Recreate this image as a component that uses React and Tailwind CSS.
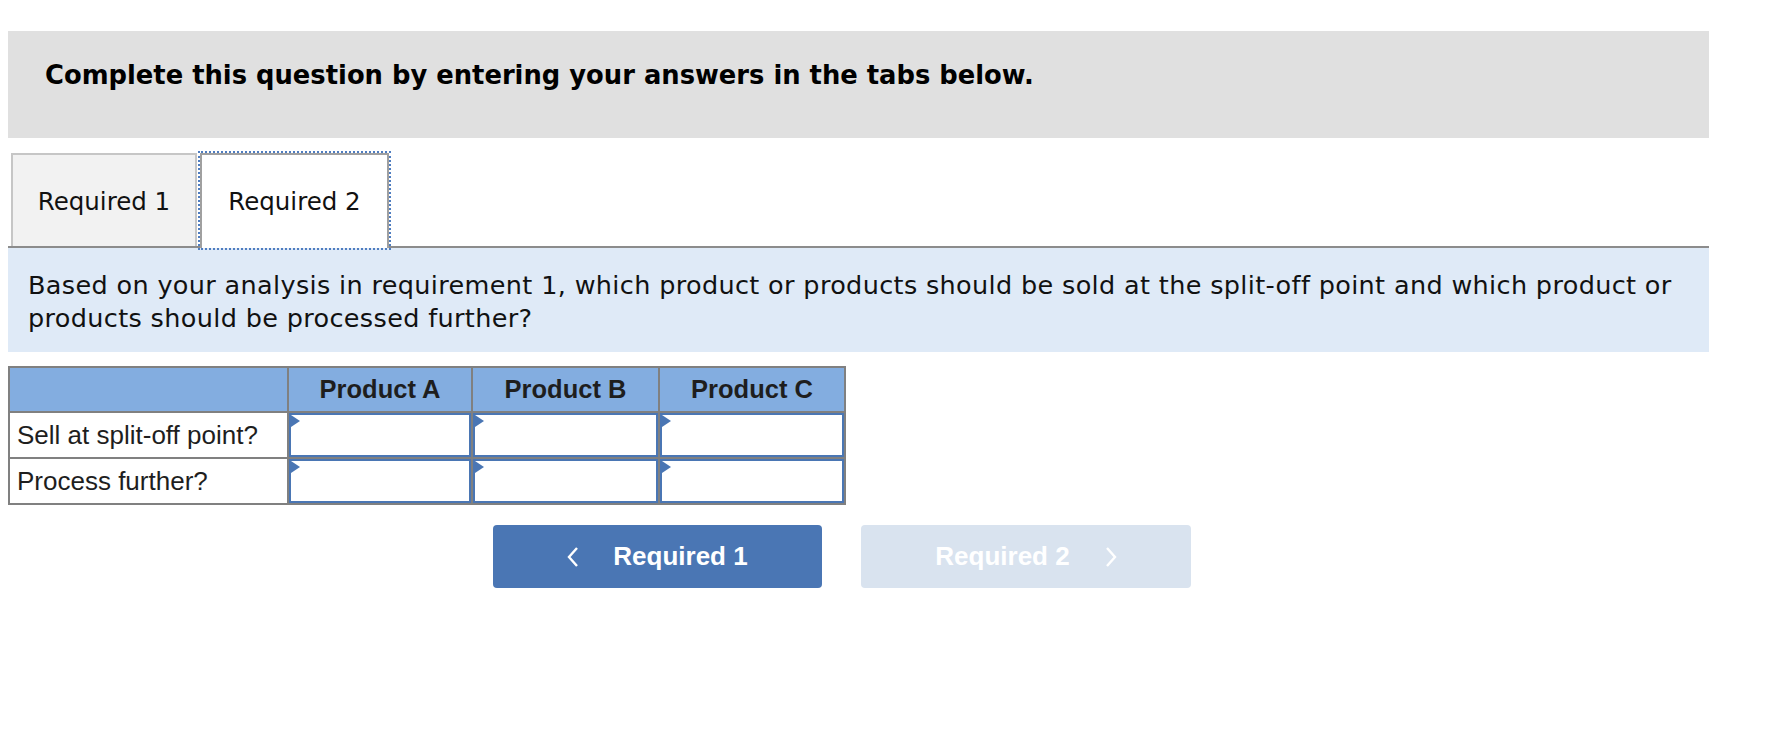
import React from "react";

const verdana = { fontFamily: '"DejaVu Sans", Verdana, sans-serif' };
const arial = { fontFamily: '"Liberation Sans", Arial, sans-serif' };

function Chevron({ dir = "left", color = "#ffffff" }) {
  const pts = dir === "left" ? "10,1 2,10 10,19" : "2,1 10,10 2,19";
  return (
    <svg width="12" height="20" viewBox="0 0 12 20" fill="none">
      <polyline points={pts} stroke={color} strokeWidth="2.4" strokeLinejoin="miter" />
    </svg>
  );
}

function AnswerCell() {
  return (
    <td className="border-2 border-[#808080] p-0 h-[46px]">
      <div className="relative h-[44px] border-2 border-[#4a76b4] bg-white">
        <svg className="absolute left-0 top-0" width="10" height="13" viewBox="0 0 10 13">
          <polygon points="0,0 9,6 0,12" fill="#4a76b4" />
        </svg>
      </div>
    </td>
  );
}

export default function App() {
  const rows = ["Sell at split-off point?", "Process further?"];
  const products = ["Product A", "Product B", "Product C"];

  return (
    <div className="bg-white min-h-[736px] pt-[31px]">
      <div className="ml-[8px] w-[1701px]">
        {/* instructions bar */}
        <div className="h-[107px] bg-[#e0e0e0] pl-[37px] pt-[25px]">
          <h1 className="text-[25.8px] font-bold text-black" style={verdana}>
            Complete this question by entering your answers in the tabs below.
          </h1>
        </div>

        {/* tabs */}
        <div className="flex mt-[15px] ml-[3px] h-[93px]">
          <div
            className="w-[186px] h-[93px] bg-[#f2f2f2] border-2 border-b-0 border-[#c6c6c6] flex items-center justify-center text-[24.5px] text-[#111] pt-[3px]"
            style={verdana}
          >
            Required 1
          </div>
          <div
            className="relative z-10 ml-[3px] w-[189px] h-[95px] bg-white border-2 border-b-0 border-[#a0a0a0] outline-2 outline-dotted outline-[#4f7dc0] outline-offset-[0px] flex items-center justify-center text-[24.5px] text-[#111] pt-[1px]"
            style={verdana}
          >
            Required 2
          </div>
        </div>
        <div className="h-[2px] bg-[#8c8c8c]" />

        {/* question */}
        <div className="h-[104px] bg-[#dfeaf7] pl-[20px] pt-[21px] pr-[12px]">
          <p className="text-[25.5px] leading-[33px] tracking-[0.35px] text-[#111]" style={verdana}>
            Based on your analysis in requirement 1, which product or products should be sold at the split-off point and which product or products should be processed further?
          </p>
        </div>

        {/* answer table */}
        <table className="mt-[14px] border-collapse border-2 border-[#808080] table-fixed w-[836px]" style={arial}>
          <colgroup>
            <col className="w-[279px]" />
            <col className="w-[184px]" />
            <col className="w-[187px]" />
            <col className="w-[186px]" />
          </colgroup>
          <thead>
            <tr className="bg-[#83ade0] h-[45px]">
              <th className="border-2 border-[#808080]" />
              {products.map(p => (
                <th key={p} className="border-2 border-[#808080] text-[25.5px] font-bold text-[#1e1e1e] text-center">
                  {p}
                </th>
              ))}
            </tr>
          </thead>
          <tbody>
            {rows.map(r => (
              <tr key={r} className="h-[46px]">
                <td className="border-2 border-[#808080] pl-[7px] text-[26px] text-[#1e1e1e] text-left whitespace-nowrap">
                  {r}
                </td>
                <AnswerCell />
                <AnswerCell />
                <AnswerCell />
              </tr>
            ))}
          </tbody>
        </table>

        {/* navigation */}
        <div className="flex gap-[39px] ml-[485px] mt-[20px]" style={arial}>
          <button
            type="button"
            className="w-[329px] h-[63px] rounded-[4px] bg-[#4a76b4] flex items-center justify-center gap-[34px] text-white text-[26px] font-bold"
          >
            <Chevron dir="left" />
            <span>Required 1</span>
          </button>
          <button
            type="button"
            className="w-[330px] h-[63px] rounded-[4px] bg-[#d9e3ef] flex items-center justify-center gap-[35px] text-white text-[26px] font-bold"
          >
            <span>Required 2</span>
            <Chevron dir="right" />
          </button>
        </div>
      </div>
    </div>
  );
}
